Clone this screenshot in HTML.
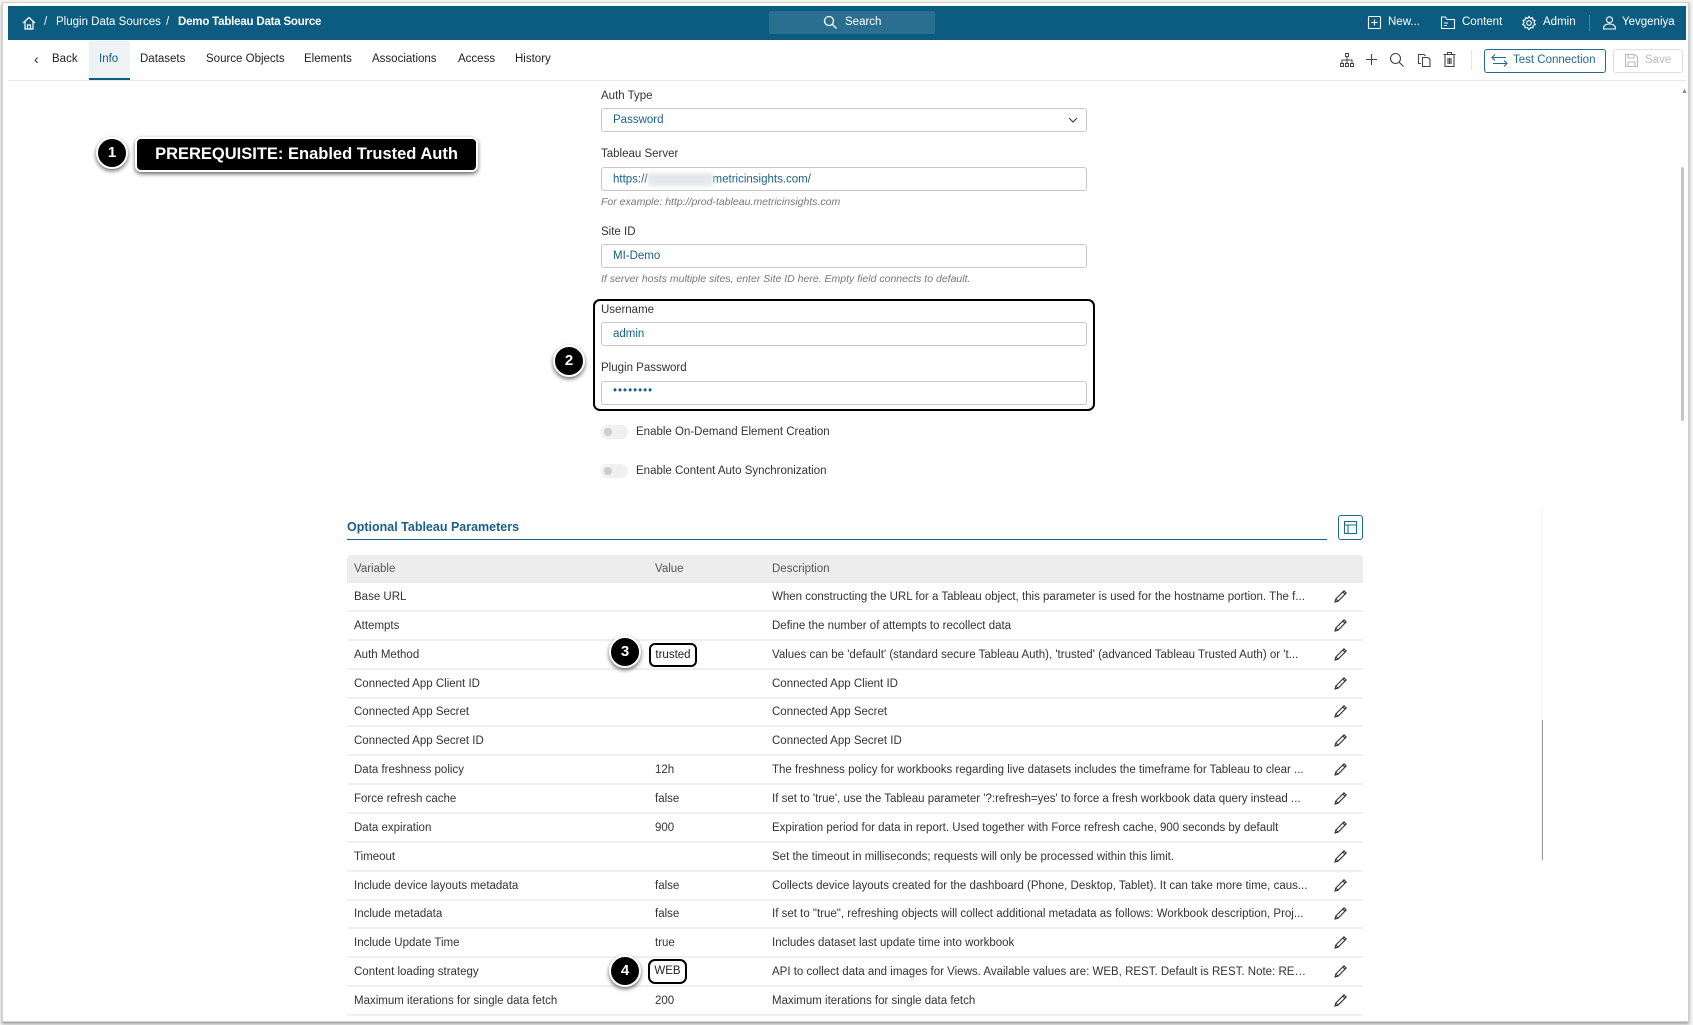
<!DOCTYPE html>
<html><head><meta charset="utf-8">
<style>
*{box-sizing:border-box;margin:0;padding:0}
body{width:1693px;height:1025px;background:#f2f2f2;font-family:"Liberation Sans",sans-serif;font-size:11.5px;color:#222;position:relative;overflow:hidden}
.frame{position:absolute;left:2px;top:2px;width:1687px;height:1020px;background:#fff;border:1px solid #d0d0d0;box-shadow:0 2px 3px rgba(0,0,0,.35)}
.a{position:absolute;white-space:nowrap}
.hdr{position:absolute;left:8px;top:6px;width:1678px;height:34px;background:#0b5c80;color:#fff}
.hdr .a{color:#fff;top:10px;font-size:11.5px}
.tabs .a{top:53px;font-size:11.5px;color:#222}
.lbl{font-size:11.5px;color:#333}
.inp{position:absolute;left:601px;width:486px;height:24px;border:1px solid #c8c8c8;border-radius:3px;background:#fff}
.inp span{position:absolute;left:11px;top:5px;color:#1a5f8a;font-size:11.5px}
.hint{font-size:10.5px;color:#777;font-style:italic}
.mk{position:absolute;width:32px;height:32px;border-radius:50%;background:#000;color:#fff;border:2px solid #fff;box-shadow:0 2px 4px rgba(0,0,0,.6);font-weight:bold;font-size:15px;text-align:center;line-height:28px}
.row{position:absolute;left:347px;width:1016px;height:29px;border-bottom:2px solid #f0f0f0}
.row .a{top:8px;font-size:11.5px;color:#333}
.row .ds{width:538px;overflow:hidden;text-overflow:ellipsis}
.tog{position:absolute;left:601px;width:27px;height:14px;border-radius:7px;background:#f0f0f0}
.tog:after{content:"";position:absolute;left:3px;top:3px;width:8px;height:8px;border-radius:50%;background:#ccc}
</style></head><body>
<div class="frame"></div>
<div class="hdr">
 <svg class="a" style="left:13px;top:9px" width="16" height="16" viewBox="0 0 16 16" fill="none" stroke="#fff" stroke-width="1.2"><path d="M2 8 L8 2.5 L14 8 M4 6.5 V14 H12 V6.5 M6.5 14 V10 H9.5 V14"/></svg>
 <div class="a" style="left:36px">/</div>
 <div class="a" style="left:48px">Plugin Data Sources</div>
 <div class="a" style="left:158px">/</div>
 <div class="a" style="left:170px;font-weight:bold;letter-spacing:-0.2px">Demo Tableau Data Source</div>
 <div style="position:absolute;left:761px;top:5px;width:166px;height:23px;background:#2a6f8f;border-radius:2px"></div>
 <svg class="a" style="left:815px;top:9px" width="15" height="15" viewBox="0 0 15 15" fill="none" stroke="#fff" stroke-width="1.3"><circle cx="6" cy="6" r="4.5"/><path d="M9.5 9.5 L13.5 13.5"/></svg>
 <div class="a" style="left:837px">Search</div>
 <svg class="a" style="left:1359px;top:9px" width="15" height="15" viewBox="0 0 15 15" fill="none" stroke="#fff" stroke-width="1.1"><rect x="1.5" y="1.5" width="12" height="12" rx="1"/><path d="M7.5 4.5 V10.5 M4.5 7.5 H10.5"/></svg>
 <div class="a" style="left:1380px">New...</div>
 <svg class="a" style="left:1432px;top:9px" width="16" height="15" viewBox="0 0 16 15" fill="none" stroke="#fff" stroke-width="1.1"><path d="M1.5 3 V13.5 H14.5 V4.5 H7 L5.5 2 H1.5 Z M4 8 H8 M4 10.5 H7"/></svg>
 <div class="a" style="left:1454px">Content</div>
 <svg class="a" style="left:1513px;top:9px" width="16" height="16" viewBox="0 0 16 16" fill="none" stroke="#fff" stroke-width="1.1"><circle cx="8" cy="8" r="2.3"/><path d="M8 1.5 L9.3 3.3 L11.5 2.6 L11.8 4.8 L14 5.5 L13 7.5 L14.3 9.5 L12.2 10.5 L12 12.8 L9.8 12.5 L8 14.5 L6.2 12.5 L4 12.8 L3.8 10.5 L1.7 9.5 L3 7.5 L2 5.5 L4.2 4.8 L4.5 2.6 L6.7 3.3 Z"/></svg>
 <div class="a" style="left:1535px">Admin</div>
 <div style="position:absolute;left:1581px;top:9px;width:1px;height:16px;background:#4a86a3"></div>
 <svg class="a" style="left:1594px;top:9px" width="15" height="15" viewBox="0 0 15 15" fill="none" stroke="#fff" stroke-width="1.1"><circle cx="7.5" cy="4.8" r="3"/><path d="M1.5 14 C1.5 10 4 9 7.5 9 C11 9 13.5 10 13.5 14 Z"/></svg>
 <div class="a" style="left:1614px">Yevgeniya</div>
</div>
<div style="position:absolute;left:8px;top:80px;width:1678px;height:1px;background:#e8e8e8"></div>
<div style="position:absolute;left:89px;top:41px;width:41px;height:39px;background:#eef2f5;border-bottom:2px solid #0b5c80"></div>
<div class="tabs">
 <div class="a" style="left:34px;top:51px;font-size:14px">‹</div>
 <div class="a" style="left:52px">Back</div>
 <div class="a" style="left:99px;color:#0b5c80">Info</div>
 <div class="a" style="left:140px">Datasets</div>
 <div class="a" style="left:206px">Source Objects</div>
 <div class="a" style="left:304px">Elements</div>
 <div class="a" style="left:372px">Associations</div>
 <div class="a" style="left:458px">Access</div>
 <div class="a" style="left:515px">History</div>
</div>
<svg class="a" style="left:1339px;top:52px" width="16" height="16" viewBox="0 0 16 16" fill="none" stroke="#444" stroke-width="1"><rect x="6.5" y="1.5" width="3" height="3"/><rect x="1.5" y="11.5" width="3" height="3"/><rect x="6.5" y="11.5" width="3" height="3"/><rect x="11.5" y="11.5" width="3" height="3"/><path d="M8 4.5 V11.5 M3 11.5 V8 H13 V11.5"/></svg>
<svg class="a" style="left:1364px;top:52px" width="15" height="15" viewBox="0 0 15 15" fill="none" stroke="#444" stroke-width="1.1"><path d="M7.5 2 V13 M2 7.5 H13"/></svg>
<svg class="a" style="left:1389px;top:52px" width="16" height="16" viewBox="0 0 16 16" fill="none" stroke="#444" stroke-width="1.1"><circle cx="6.5" cy="6.5" r="5"/><path d="M10.3 10.3 L14.5 14.5"/></svg>
<svg class="a" style="left:1416px;top:52px" width="16" height="16" viewBox="0 0 16 16" fill="none" stroke="#444" stroke-width="1.1"><path d="M5 11.5 H2.5 V2.5 H8 L9.5 4 M6.5 5.5 H12 L14 7.5 V14.5 H6.5 Z"/></svg>
<svg class="a" style="left:1442px;top:51px" width="15" height="17" viewBox="0 0 15 17" fill="none" stroke="#444" stroke-width="1.1"><path d="M1.5 3.5 H13.5 M5.5 3.5 V1.5 H9.5 V3.5 M3 3.5 V15.5 H12 V3.5 M6 7 V13 M7.5 7 V13 M9 7 V13"/></svg>
<div style="position:absolute;left:1471px;top:50px;width:1px;height:20px;background:#e5e5e5"></div>
<div style="position:absolute;left:1484px;top:49px;width:122px;height:24px;border:1px solid #1f6b8e;border-radius:3px"></div>
<svg class="a" style="left:1491px;top:53px" width="17" height="15" viewBox="0 0 17 15" fill="none" stroke="#1f6b8e" stroke-width="1.1"><path d="M1 4.5 H15 M4 1.5 L1 4.5 L4 7.5 M16 10.5 H2 M13 7.5 L16 10.5 L13 13.5"/></svg>
<div class="a" style="left:1513px;top:54px;color:#1f6b8e">Test Connection</div>
<div style="position:absolute;left:1613px;top:49px;width:70px;height:24px;border:1px solid #ddd;border-radius:3px"></div>
<svg class="a" style="left:1624px;top:53px" width="15" height="15" viewBox="0 0 15 15" fill="none" stroke="#bbb" stroke-width="1.1"><path d="M1.5 1.5 H11 L13.5 4 V13.5 H1.5 Z M4 1.5 V5 H10 V1.5 M4 13.5 V9 H11 V13.5"/></svg>
<div class="a" style="left:1645px;top:54px;color:#bbb">Save</div>
<div style="position:absolute;left:1681px;top:167px;width:3px;height:254px;background:#c4c4c4;border-radius:2px"></div>
<div class="a" style="left:1681px;top:88px;font-size:7px;color:#888">▲</div>
<div style="position:absolute;left:1541px;top:508px;width:1px;height:355px;background:#f3f3f3"></div>
<div style="position:absolute;left:1542px;top:720px;width:1px;height:140px;background:#999"></div>

<div class="mk" style="left:96px;top:137px">1</div>
<div style="position:absolute;left:135px;top:137px;width:343px;height:35px;background:#000;border:2px solid #fff;border-radius:6px;box-shadow:0 2px 4px rgba(0,0,0,.6);color:#fff;font-weight:bold;font-size:16.5px;line-height:30px;text-align:center">PREREQUISITE: Enabled Trusted Auth</div>

<div class="a lbl" style="left:601px;top:90px">Auth Type</div>
<div class="inp" style="top:108px"><span style="color:#1a5f8a">Password</span>
<svg style="position:absolute;right:8px;top:8px" width="10" height="7" viewBox="0 0 10 7" fill="none" stroke="#444" stroke-width="1.2"><path d="M1 1 L5 5 L9 1"/></svg></div>
<div class="a lbl" style="left:601px;top:148px">Tableau Server</div>
<div class="inp" style="top:167px"><span>https://<i style="display:inline-block;width:65px;height:13px;background:#e4e8ec;vertical-align:middle;filter:blur(2px)"></i>metricinsights.com/</span></div>
<div class="a hint" style="left:601px;top:196px">For example: http://prod-tableau.metricinsights.com</div>
<div class="a lbl" style="left:601px;top:226px">Site ID</div>
<div class="inp" style="top:244px"><span>MI-Demo</span></div>
<div class="a hint" style="left:601px;top:273px">If server hosts multiple sites, enter Site ID here. Empty field connects to default.</div>

<div style="position:absolute;left:593px;top:299px;width:502px;height:112px;border:2px solid #000;border-radius:7px"></div>
<div class="a lbl" style="left:601px;top:304px">Username</div>
<div class="inp" style="top:322px"><span>admin</span></div>
<div class="a lbl" style="left:601px;top:362px">Plugin Password</div>
<div class="inp" style="top:381px"><span style="letter-spacing:1px;top:3px">••••••••</span></div>
<div class="mk" style="left:553px;top:345px">2</div>

<div class="tog" style="top:425px"></div>
<div class="a lbl" style="left:636px;top:426px">Enable On-Demand Element Creation</div>
<div class="tog" style="top:464px"></div>
<div class="a lbl" style="left:636px;top:465px">Enable Content Auto Synchronization</div>

<div class="a" style="left:347px;top:520px;font-size:12.5px;font-weight:bold;color:#1a5f8a">Optional Tableau Parameters</div>
<div style="position:absolute;left:347px;top:539px;width:980px;height:1px;background:#1a5f8a"></div>
<div style="position:absolute;left:1338px;top:515px;width:25px;height:25px;border:1px solid #1f6b8e;border-radius:3px"></div>
<svg class="a" style="left:1343px;top:520px" width="15" height="15" viewBox="0 0 15 15" fill="none" stroke="#1f6b8e" stroke-width="1.1"><rect x="1.5" y="1.5" width="12" height="12"/><path d="M1.5 5 H13.5 M5 5 V13.5"/></svg>

<div style="position:absolute;left:347px;top:555px;width:1016px;height:28px;background:#ededed;border-radius:3px 3px 0 0"></div>
<div class="a" style="left:354px;top:563px;color:#555">Variable</div>
<div class="a" style="left:655px;top:563px;color:#555">Value</div>
<div class="a" style="left:772px;top:563px;color:#555">Description</div>

<div id="rows"></div>
<script>
var d=[["Base URL","","When constructing the URL for a Tableau object, this parameter is used for the hostname portion. The f..."],
["Attempts","","Define the number of attempts to recollect data"],
["Auth Method","trusted","Values can be 'default' (standard secure Tableau Auth), 'trusted' (advanced Tableau Trusted Auth) or 't..."],
["Connected App Client ID","","Connected App Client ID"],
["Connected App Secret","","Connected App Secret"],
["Connected App Secret ID","","Connected App Secret ID"],
["Data freshness policy","12h","The freshness policy for workbooks regarding live datasets includes the timeframe for Tableau to clear ..."],
["Force refresh cache","false","If set to 'true', use the Tableau parameter '?:refresh=yes' to force a fresh workbook data query instead ..."],
["Data expiration","900","Expiration period for data in report. Used together with Force refresh cache, 900 seconds by default"],
["Timeout","","Set the timeout in milliseconds; requests will only be processed within this limit."],
["Include device layouts metadata","false","Collects device layouts created for the dashboard (Phone, Desktop, Tablet). It can take more time, caus..."],
["Include metadata","false","If set to \"true\", refreshing objects will collect additional metadata as follows: Workbook description, Proj..."],
["Include Update Time","true","Includes dataset last update time into workbook"],
["Content loading strategy","WEB","API to collect data and images for Views. Available values are: WEB, REST. Default is REST. Note: REST ..."],
["Maximum iterations for single data fetch","200","Maximum iterations for single data fetch"]];
var h="";var pen='<svg class="a" style="left:986px;top:6px" width="15" height="15" viewBox="0 0 15 15" fill="none" stroke="#333" stroke-width="1.1"><path d="M2 13 L2.8 10 L11 1.8 L13.2 4 L5 12.2 Z M9.8 3 L12 5.2 M2.8 10 L5 12.2"/></svg>';
for(var i=0;i<d.length;i++){var t=583+i*28.86;
h+='<div class="row" style="top:'+t+'px"><div class="a" style="left:7px">'+d[i][0]+'</div><div class="a" style="left:308px">'+d[i][1]+'</div><div class="a ds" style="left:425px">'+d[i][2].replace(/</g,"&lt;")+'</div>'+pen+'</div>';}
document.getElementById("rows").innerHTML=h;
</script>
<div style="position:absolute;left:649px;top:643px;width:48px;height:24px;border:2px solid #000;border-radius:6px;background:#fff;text-align:center;line-height:20px;font-size:11.5px">trusted</div>
<div class="mk" style="left:609px;top:636px">3</div>
<div style="position:absolute;left:648px;top:959px;width:39px;height:25px;border:2px solid #000;border-radius:7px;background:#fff;text-align:center;line-height:21px;font-size:11.5px">WEB</div>
<div class="mk" style="left:609px;top:955px">4</div>
</body></html>
